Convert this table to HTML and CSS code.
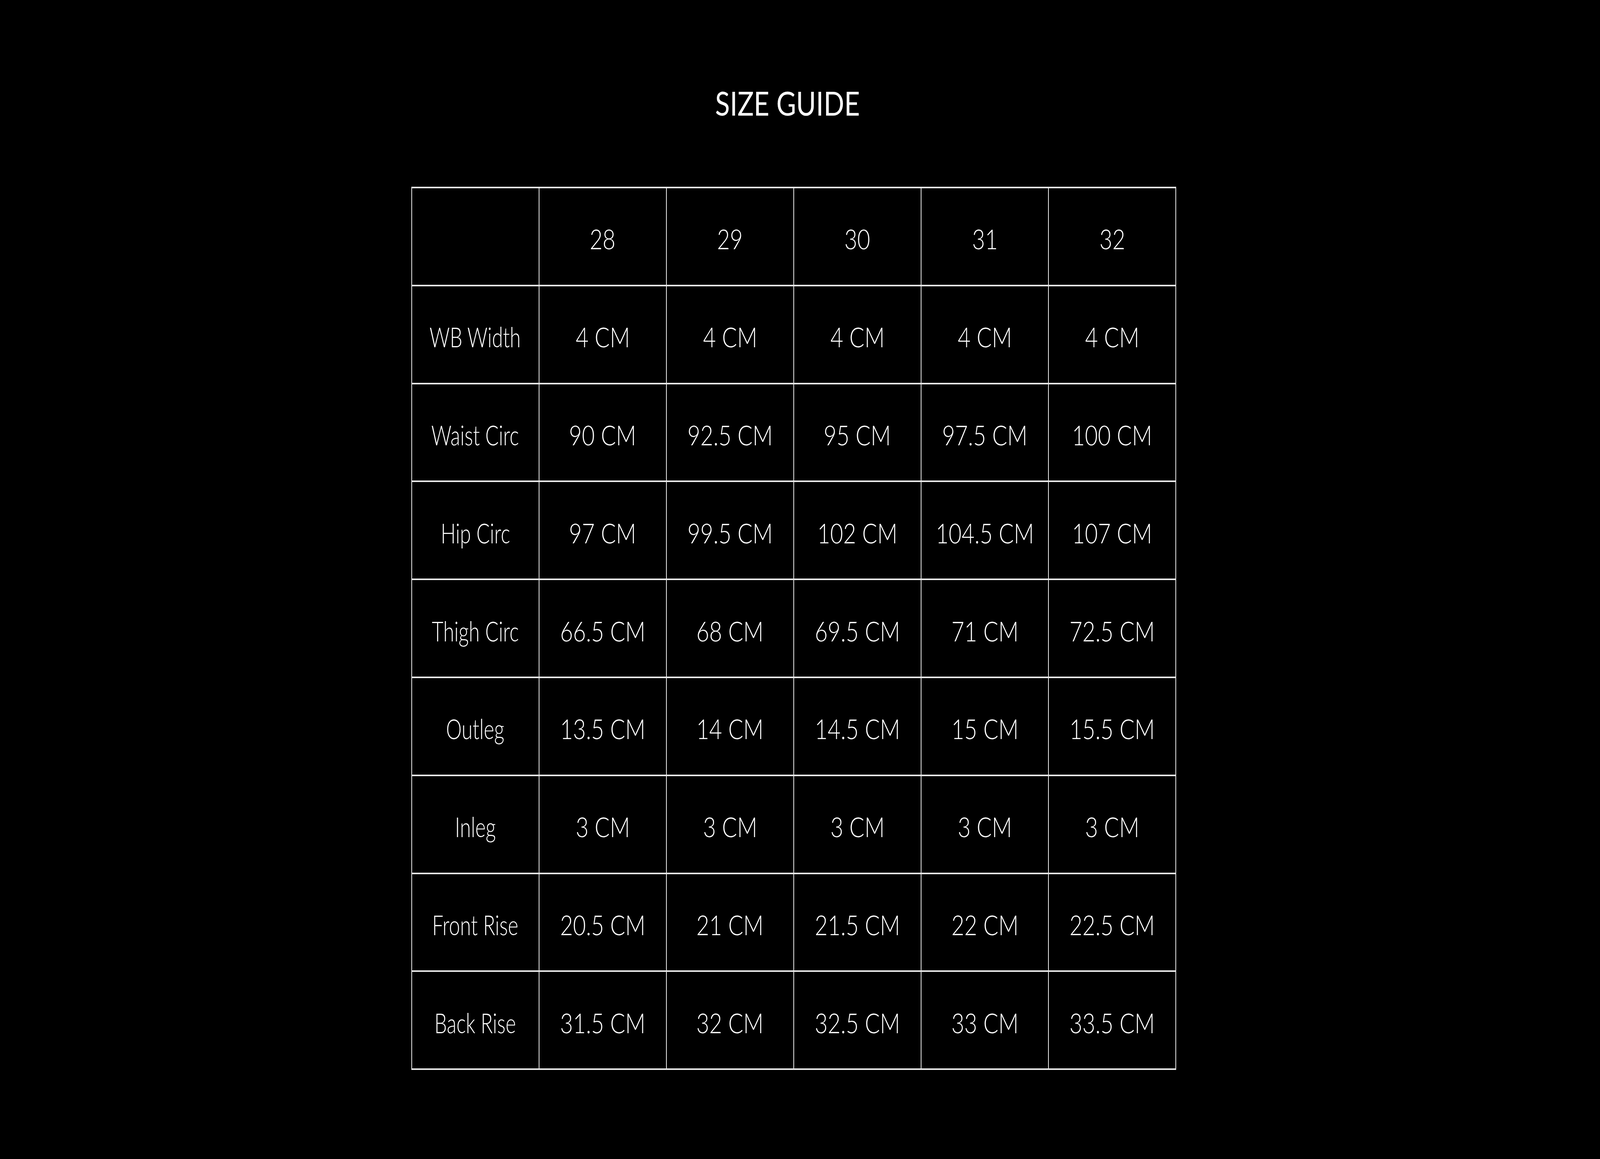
FILE: index.html
```html
<!DOCTYPE html>
<html lang="en">
<head>
<meta charset="utf-8">
<title>Size Guide</title>
<link rel="stylesheet" href="styles.css">
</head>
<body>
<main class="page">
  <h1 class="title"><span class="wide">SIZE GUIDE</span></h1>
  <table class="sheet">
    <thead>
      <tr>
        <th class="label"></th>
        <th><span class="val">28</span></th>
        <th><span class="val">29</span></th>
        <th><span class="val">30</span></th>
        <th><span class="val">31</span></th>
        <th><span class="val">32</span></th>
      </tr>
    </thead>
    <tbody>
      <tr>
        <th class="label"><span class="lab">WB Width</span></th>
        <td><span class="val">4 CM</span></td>
        <td><span class="val">4 CM</span></td>
        <td><span class="val">4 CM</span></td>
        <td><span class="val">4 CM</span></td>
        <td><span class="val">4 CM</span></td>
      </tr>
      <tr>
        <th class="label"><span class="lab">Waist Circ</span></th>
        <td><span class="val">90 CM</span></td>
        <td><span class="val">92.5 CM</span></td>
        <td><span class="val">95 CM</span></td>
        <td><span class="val">97.5 CM</span></td>
        <td><span class="val">100 CM</span></td>
      </tr>
      <tr>
        <th class="label"><span class="lab">Hip Circ</span></th>
        <td><span class="val">97 CM</span></td>
        <td><span class="val">99.5 CM</span></td>
        <td><span class="val">102 CM</span></td>
        <td><span class="val">104.5 CM</span></td>
        <td><span class="val">107 CM</span></td>
      </tr>
      <tr>
        <th class="label"><span class="lab">Thigh Circ</span></th>
        <td><span class="val">66.5 CM</span></td>
        <td><span class="val">68 CM</span></td>
        <td><span class="val">69.5 CM</span></td>
        <td><span class="val">71 CM</span></td>
        <td><span class="val">72.5 CM</span></td>
      </tr>
      <tr>
        <th class="label"><span class="lab">Outleg</span></th>
        <td><span class="val">13.5 CM</span></td>
        <td><span class="val">14 CM</span></td>
        <td><span class="val">14.5 CM</span></td>
        <td><span class="val">15 CM</span></td>
        <td><span class="val">15.5 CM</span></td>
      </tr>
      <tr>
        <th class="label"><span class="lab">Inleg</span></th>
        <td><span class="val">3 CM</span></td>
        <td><span class="val">3 CM</span></td>
        <td><span class="val">3 CM</span></td>
        <td><span class="val">3 CM</span></td>
        <td><span class="val">3 CM</span></td>
      </tr>
      <tr>
        <th class="label"><span class="lab">Front Rise</span></th>
        <td><span class="val">20.5 CM</span></td>
        <td><span class="val">21 CM</span></td>
        <td><span class="val">21.5 CM</span></td>
        <td><span class="val">22 CM</span></td>
        <td><span class="val">22.5 CM</span></td>
      </tr>
      <tr>
        <th class="label"><span class="lab">Back Rise</span></th>
        <td><span class="val">31.5 CM</span></td>
        <td><span class="val">32 CM</span></td>
        <td><span class="val">32.5 CM</span></td>
        <td><span class="val">33 CM</span></td>
        <td><span class="val">33.5 CM</span></td>
      </tr>
    </tbody>
  </table>
</main>
</body>
</html>
```
FILE: styles.css
```css
/* Units are expressed in reference-frame pixels (7031 x 2967):
   --x is one horizontal reference pixel, --y one vertical reference pixel,
   --sx compensates text width when the viewport aspect differs. */
:root {
  --x: calc(100vw / 7031);
  --y: calc(100vh / 2967);
  --sx: 1;
  --line: #e9e9e9;
}

@media (max-width: 4200px) {
  :root {
    --sx: 0.58257;
  }
}

html, body {
  margin: 0;
  padding: 0;
  background: #000;
}

body {
  color: #fff;
  font-family: "Lato", "Liberation Sans", sans-serif;
  overflow: hidden;
}

.page {
  display: flex;
  flex-direction: column;
  align-items: center;
  padding: calc(221 * var(--y)) calc(55 * var(--x)) 0 0;
  height: 100vh;
  box-sizing: border-box;
}

.title {
  margin: 0 0 calc(172 * var(--y));
  padding-right: calc(56 * var(--x));
  font-size: calc(85 * var(--y));
  line-height: 1;
  font-weight: 400;
  white-space: nowrap;
}

.wide {
  display: inline-block;
  transform: scaleX(calc(1.40 * var(--sx)));
}

.sheet {
  border-collapse: separate;
  border-spacing: 0;
  table-layout: fixed;
  width: calc(3362 * var(--x));
  border-top: calc(4 * var(--y)) solid var(--line);
  border-left: calc(4 * var(--x)) solid var(--line);
}

.sheet tr {
  height: calc(250.8 * var(--y));
}

.sheet th,
.sheet td {
  border-right: calc(4 * var(--x)) solid var(--line);
  border-bottom: calc(4 * var(--y)) solid var(--line);
  padding: calc(12 * var(--y)) 0 0;
  text-align: center;
  vertical-align: middle;
  font-size: calc(70 * var(--y));
  line-height: 1;
  font-weight: 300;
  white-space: nowrap;
}

.val,
.lab {
  display: inline-block;
}

.val {
  transform: scaleX(calc(1.40 * var(--sx)));
}

.lab {
  transform: scaleX(calc(1.25 * var(--sx)));
}
```
